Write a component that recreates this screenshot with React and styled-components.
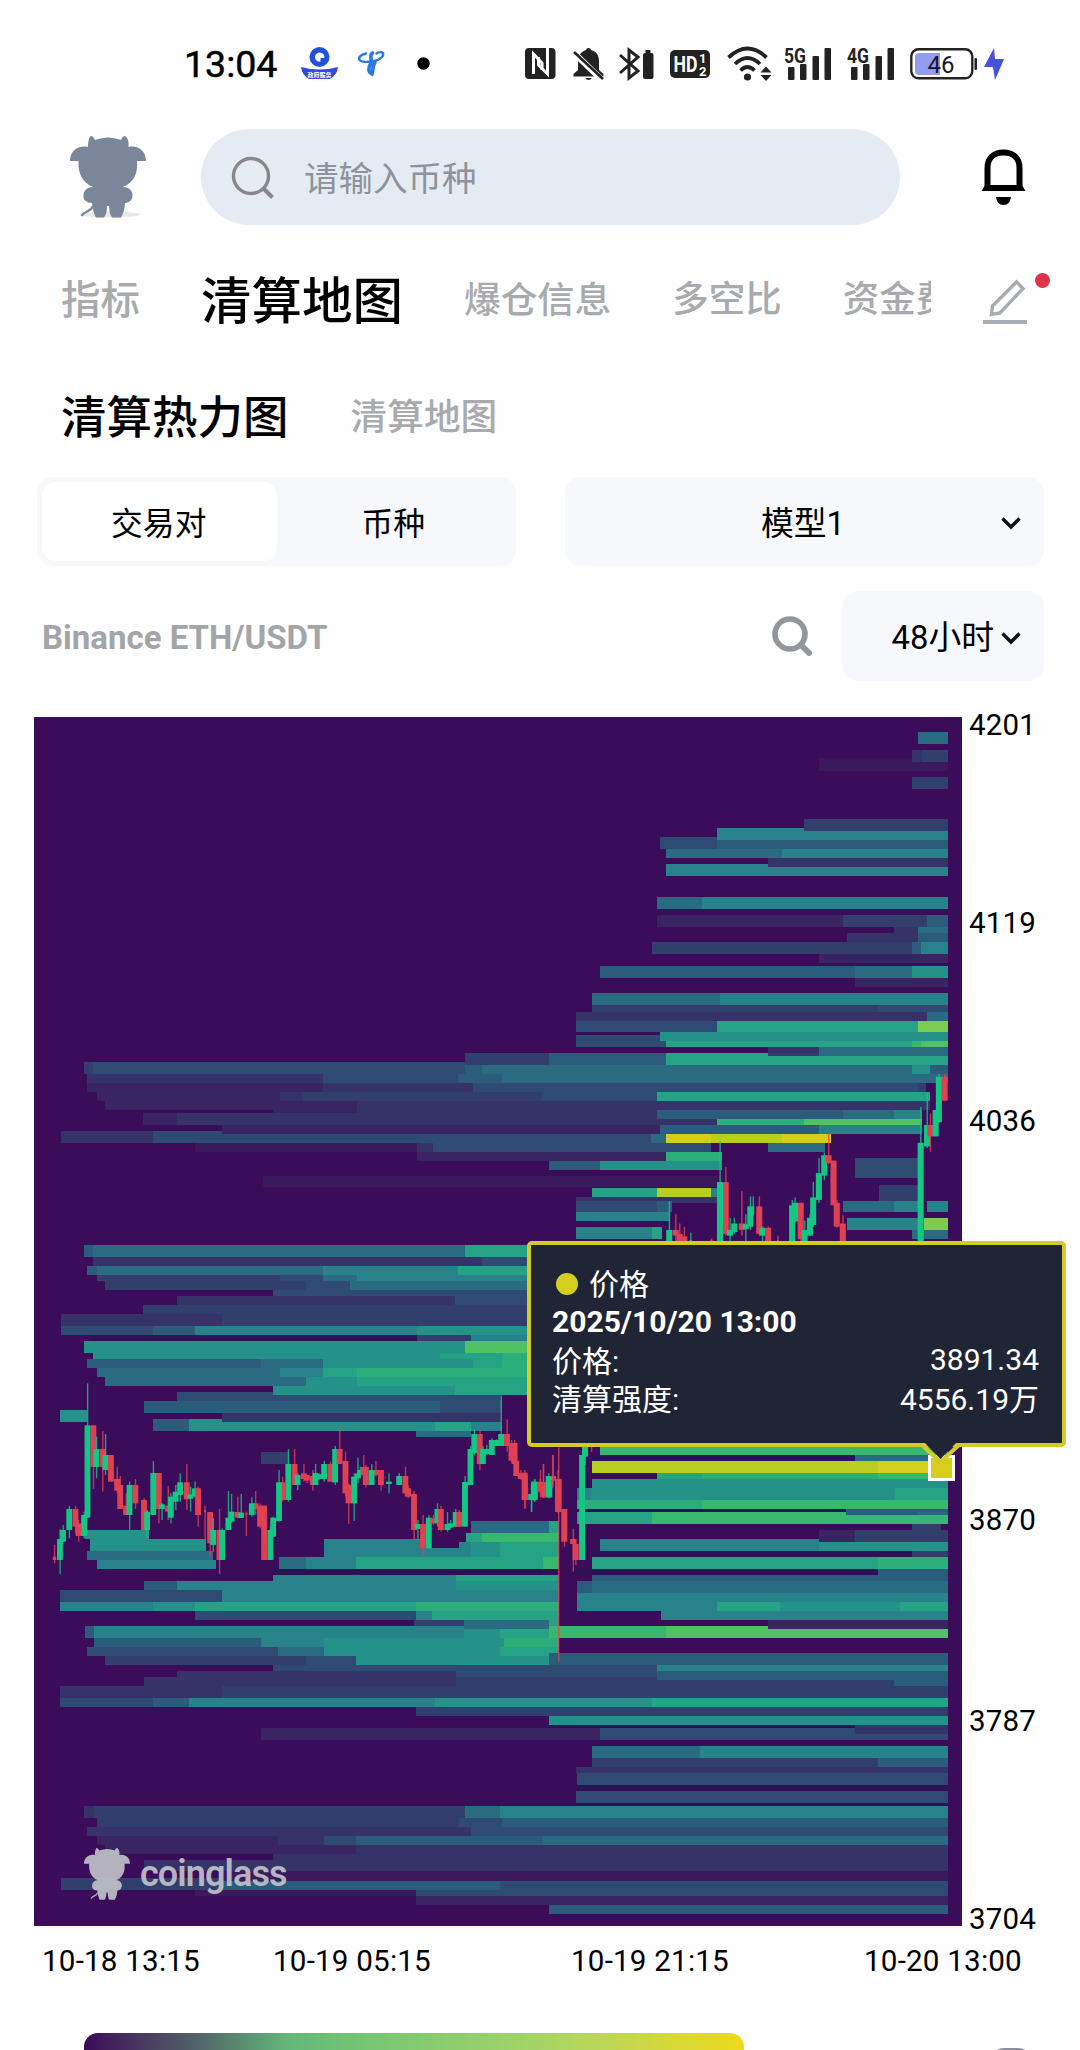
import React from "react";
import styled, { createGlobalStyle } from "styled-components";

const GlobalStyle = createGlobalStyle`
    * {
        box-sizing: border-box;
    }
    body {
        margin: 0;
        background: #fefefe;
        font-family: Roboto, "Noto Sans CJK SC", sans-serif;
        color: #000;
    }
    svg {
        display: block;
        flex: none;
        overflow: visible;
    }
`;

const Page = styled.div`
    width: 1080px;
    height: 2050px;
    overflow: hidden;
    display: flex;
    flex-direction: column;
    & > * {
        flex: none;
    }
`;

/* status bar */
const StatusBar = styled.div`
    height: 129px;
    padding: 0 70px 2px 184px;
    display: flex;
    align-items: center;
`;
const Clock = styled.span`
    flex: none;
    width: 117px;
    font-size: 37.5px;
    font-weight: 400;
    -webkit-text-stroke: 0.5px #000;
`;
const StatusIcon = styled.svg`
    margin-left: ${props => props.$gap || 0}px;
`;

/* header */
const Header = styled.header`
    height: 96px;
    padding-left: 70px;
    display: flex;
    align-items: center;
`;
const Avatar = styled.div`
    color: #7a879a;
`;
const SearchBox = styled.div`
    width: 699px;
    height: 96px;
    margin: 0 81px 0 55px;
    padding-left: 30px;
    border-radius: 48px;
    background: #e4ebf3;
    display: flex;
    align-items: center;
    gap: 30px;
`;
const Placeholder = styled.span`
    margin-top: -2px;
    font-size: 34.5px;
    color: #8d939c;
`;

/* tabs */
const TabBar = styled.nav`
    height: 148px;
    padding-left: 61px;
    display: flex;
    align-items: center;
`;
const TabList = styled.div`
    width: 870px;
    height: 100px;
    padding-bottom: 5px;
    overflow: hidden;
    display: flex;
    align-items: center;
    gap: 61px;
`;
const Tab = styled.span`
    flex: none;
    white-space: nowrap;
    font-size: ${props => props.$size}px;
    font-weight: 500;
    color: ${props => (props.$active ? "#000" : "#a8aaad")};
`;
const EditButton = styled.div`
    position: relative;
    margin-left: 52px;
    height: 44px;
    margin-top: 4px;
`;
const RedDot = styled.i`
    position: absolute;
    top: -6px;
    left: 52px;
    width: 15px;
    height: 15px;
    border-radius: 50%;
    background: #df3447;
`;
const SubTabs = styled.nav`
    height: 86px;
    padding: 0 0 5px 61px;
    display: flex;
    align-items: center;
    gap: 62px;
`;

/* controls */
const Controls = styled.div`
    height: 89px;
    margin: 18px 36px 0 37px;
    display: flex;
    justify-content: space-between;
`;
const Segment = styled.div`
    width: 479px;
    padding: 5px;
    border-radius: 16px;
    background: #f6f8fb;
    display: flex;
`;
const SegmentItem = styled.div`
    flex: 1;
    border-radius: 14px;
    background: ${props => (props.$active ? "#fff" : "transparent")};
    display: flex;
    align-items: center;
    justify-content: center;
    font-size: 31.8px;
    padding: 0 1px 2px 0;
`;
const Select = styled.div`
    width: ${props => props.$width}px;
    height: ${props => props.$height}px;
    padding-right: 23px;
    border-radius: 16px;
    background: #f6f8fb;
    display: flex;
    align-items: center;
    justify-content: flex-end;
    font-size: 32.8px;
`;
const SelectValue = styled.span`
    flex: ${props => (props.$wide ? 1 : "none")};
    margin-top: -3px;
    padding-left: ${props => (props.$wide ? 40 : 0)}px;
    margin-right: ${props => (props.$wide ? 0 : 7)}px;
    text-align: center;
`;
const SelectArrow = styled.svg`
    margin-top: 3px;
`;
const PairRow = styled.div`
    height: 90px;
    margin: 25px 36px 0 42px;
    display: flex;
    align-items: center;
`;
const PairName = styled.span`
    flex: 1;
    margin-top: 2px;
    font-size: 33px;
    font-weight: 700;
    color: #a3a5a8;
`;
const PairSearch = styled.svg`
    margin-right: 29px;
`;

/* chart */
const ChartArea = styled.section`
    position: relative;
    height: 1209px;
    margin-top: 36px;
    padding-left: 34px;
    display: flex;
`;
const PriceAxis = styled.div`
    padding: 0 0 0 7px;
    margin: -9px 0;
    display: flex;
    flex-direction: column;
`;
const AxisLabel = styled.span`
    font-size: 29.5px;
    line-height: 35px;
    margin-top: ${props => props.$top || 0}px;
    letter-spacing: 0.2px;
`;
const TimeAxis = styled.div`
    height: 70px;
    padding-left: 42px;
    display: flex;
    align-items: center;
`;
const TimeLabel = styled.span`
    width: ${props => props.$width}px;
    font-size: 29.6px;
    white-space: nowrap;
    letter-spacing: 0.2px;
`;
const Watermark = styled.div`
    position: absolute;
    left: 84px;
    top: 1131px;
    display: flex;
    align-items: center;
    gap: 10px;
    color: #c3c5cb;
    opacity: 0.9;
`;
const WatermarkText = styled.span`
    font-size: 36px;
    line-height: 52px;
    font-weight: 600;
    letter-spacing: -0.9px;
`;

/* tooltip */
const Tooltip = styled.div`
    position: absolute;
    left: 527px;
    top: 524px;
    width: 539px;
    height: 206px;
    padding: 20px 23px 0 21px;
    border: 4px solid #d3cb2a;
    border-radius: 5px;
    background: #1f2534;
    color: #fff;
    font-size: 30px;
`;
const TipLine = styled.div`
    height: ${props => props.$height}px;
    display: flex;
    align-items: center;
    justify-content: ${props => (props.$spread ? "space-between" : "flex-start")};
    font-weight: ${props => (props.$bold ? 700 : 400)};
`;
const TipName = styled.span`
    margin-top: -2px;
`;
const TipDot = styled.i`
    width: 22px;
    height: 22px;
    margin: 2px 11px 0 4px;
    border-radius: 50%;
    background: #d6ce1e;
`;
const TipArrow = styled.svg`
    position: absolute;
    left: 920px;
    top: 724px;
`;
const Marker = styled.div`
    position: absolute;
    left: 928px;
    top: 738px;
    width: 27px;
    height: 26px;
    border: 3px solid #fff;
    background: #d6ce1e;
`;

/* legend */
const Legend = styled.div`
    margin-top: 37px;
    padding-left: 84px;
    display: flex;
    align-items: flex-start;
`;
const LegendBar = styled.div`
    width: 660px;
    height: 40px;
    border-radius: 14px;
    background: linear-gradient(90deg, #3b0c5a 0%, #46305f 7%, #52636a 17%, #63b879 31%, #74c573 42%, #a3d466 68%, #bad65a 78%, #dcd832 91%, #ecd91c 100%);
`;
const LegendToggle = styled.div`
    width: 42px;
    height: 42px;
    margin: 15px 0 0 246px;
    border-radius: 14px;
    background: #8b8f9b;
`;

const COLORS = {
    x: "#2b1256",
    a: "#3a1a5c",
    b: "#382561",
    c: "#353367",
    d: "#323f6d",
    e: "#2f4b73",
    f: "#2c5c7b",
    g: "#2a6b82",
    h: "#27828a",
    i: "#249289",
    j: "#26a284",
    k: "#2cae7a",
    l: "#38b86f",
    m: "#50c264",
    n: "#7dcb50",
    o: "#b8cf22",
    p: "#d6ce1e",
};

// [top, bottom, end, [x, level], ...] every level runs to the next x
const END = 947.5;
const ROWS = [
    [758, 771, END, [819, "a"]],
    [732, 744, END, [918, "g"]],
    [750, 762, END, [912, "c"], [922, "d"]],
    [777, 789, END, [912, "d"]],
    [819, 831, END, [804, "d"]],
    [828, 831, 804, [717, "h"]],
    [831, 840, END, [717, "h"]],
    [837, 849, 717, [660, "e"]],
    [840, 849, END, [717, "f"]],
    [849, 857.5, END, [666, "g"], [782, "h"]],
    [857.5, 867, END, [768, "c"]],
    [864, 867, 768, [666, "h"]],
    [867, 876, END, [666, "h"]],
    [897, 908.5, END, [657, "g"], [702, "h"]],
    [915, 927, END, [657, "b"], [843, "d"], [927, "f"]],
    [927, 933, END, [894, "c"], [918, "g"]],
    [933, 942, END, [847, "c"], [918, "f"]],
    [942, 954, END, [651.5, "d"], [912, "f"], [921, "h"]],
    [954, 963, END, [819, "b"]],
    [966, 977.5, END, [600, "f"], [855, "g"], [912, "i"]],
    [977.5, 987, END, [855, "b"]],
    [993, 1004.6, END, [591.5, "g"], [720, "h"]],
    [1004.6, 1014, END, [591.5, "d"], [878, "e"]],
    [1012, 1023, END, [576, "c"], [927, "g"]],
    [1021, 1032, END, [576, "e"], [717, "j"], [918, "n"]],
    [1032, 1041, END, [660, "i"]],
    [1035, 1041, 660, [576, "e"]],
    [1041, 1047, END, [576, "e"], [666, "j"], [912, "l"], [921, "m"]],
    [1047, 1053, END, [768, "c"], [819, "g"]],
    [1053, 1065, END, [465, "d"], [549, "f"], [666, "j"]],
    [1053, 1056, END, [768, "d"], [819, "g"]],
    [1062, 1074, 465, [84, "d"], [93, "e"]],
    [1065, 1074, END, [465, "f"], [482, "g"], [912, "i"], [930, "f"]],
    [1074, 1083, END, [87, "c"], [323, "e"], [458, "f"], [502, "g"]],
    [1083, 1092, 926, [87, "b"], [323, "c"], [473, "e"], [918, "d"]],
    [1092, 1101, 930, [97, "b"], [280, "c"], [303, "d"], [542, "e"], [657, "j"]],
    [1101, 1110, 930, [105, "b"], [357, "c"]],
    [1110, 1113, 657, [273, "b"], [357, "c"]],
    [1110, 1119, 922, [657, "f"], [843, "g"], [894, "h"]],
    [1113, 1125, 657, [143, "b"], [177, "c"]],
    [1119, 1125, 922, [657, "c"], [717, "k"], [804, "m"]],
    [1125, 1134, 922, [222, "b"], [660, "f"], [819, "h"]],
    [1131, 1143, 222, [61, "c"], [153, "e"]],
    [1134, 1143, 831, [222, "e"], [651, "g"], [666, "p"], [711, "o"], [782, "p"]],
    [1143, 1152, 711, [195, "a"], [417, "c"], [433, "e"]],
    [1143, 1152, 825, [768, "g"]],
    [1152, 1161, 722, [417, "b"], [666, "k"]],
    [1161, 1170, 722, [549, "f"], [600, "i"]],
    [1176, 1187, 717, [263, "a"]],
    [1158, 1178, 918, [855, "e"]],
    [1185, 1201, 918, [879, "d"]],
    [1188, 1197, 717, [591.5, "j"], [657, "o"], [711, "h"]],
    [1197, 1203, 717, [576, "c"]],
    [1201, 1212, 672, [576, "e"], [657, "f"]],
    [1212, 1221, 670, [576, "h"]],
    [1227, 1238.5, 662, [576, "h"], [652, "j"]],
    [1201, 1212, 918, [843, "g"], [894, "h"]],
    [1201, 1212, END, [927, "h"]],
    [1218, 1230, 918, [847, "h"]],
    [1218, 1230, END, [924, "n"]],
    [1230, 1238.5, END, [912, "g"]],

    [1245, 1257, 530, [84, "f"], [93, "g"], [465, "j"]],
    [1257, 1266, 530, [93, "c"], [482, "e"]],
    [1266, 1275, 530, [87, "f"], [97, "g"], [323, "h"], [458, "j"]],
    [1275, 1281, 530, [97, "d"], [280, "e"], [323, "g"], [357, "h"]],
    [1281, 1290, 530, [105, "d"], [306, "e"], [350, "g"]],
    [1290, 1299, 530, [273, "e"]],
    [1296, 1305, 530, [177, "c"], [455, "e"]],
    [1305, 1314, 530, [143, "d"]],
    [1314, 1326, 530, [61, "c"], [222, "d"]],
    [1326, 1335, 530, [61, "e"], [153, "f"], [195, "h"], [417, "i"]],
    [1335, 1341, 530, [93, "x"], [417, "d"], [471, "h"]],
    [1341, 1353, 530, [84, "i"], [465, "m"]],
    [1353, 1359, 530, [93, "i"], [440, "j"], [502, "k"]],
    [1359, 1368, 530, [87, "f"], [261, "g"], [323, "i"], [473, "j"], [502, "k"]],
    [1368, 1377, 530, [97, "g"], [280, "h"], [323, "j"], [357, "k"]],
    [1377, 1386, 530, [105, "g"], [306, "i"], [357, "j"]],
    [1386, 1395, 530, [273, "i"], [455, "j"]],
    [1392, 1395, 273, [177, "e"]],
    [1395, 1401, 502, [177, "e"]],
    [1401, 1413, 502, [144, "f"], [440, "e"]],
    [1413, 1422, 502, [222, "c"]],
    [1419, 1422, 222, [153, "f"], [189, "i"]],
    [1422, 1431, 502, [153, "f"], [189, "i"], [435, "j"], [471, "h"]],
    [1431, 1437, 471, [416, "g"]],
    [1410, 1422, 87, [60, "i"]],
    [1452, 1464, 289, [261, "d"]],

    [1530, 1539, 149, [85, "i"]],
    [1539, 1551, 206, [90, "i"]],
    [1551, 1560, 213, [87, "g"]],
    [1560, 1569, 216, [97, "h"]],
    [1521, 1533, 559, [471, "g"], [549, "j"]],
    [1533, 1542, 559, [466, "j"], [482, "l"]],
    [1539, 1557, 420, [324, "h"]],
    [1548, 1557, 459, [420, "h"]],
    [1542, 1557, 559, [459, "h"], [471, "i"], [500, "j"]],
    [1557, 1569, 559, [279, "g"], [306, "h"], [356, "j"], [543, "l"]],
    [1569, 1575, 559, [273, "x"]],
    [1575, 1581, 559, [273, "h"], [456, "j"]],
    [1581, 1590, 559, [144, "f"], [177, "h"], [456, "i"]],
    [1590, 1602, 559, [60, "e"], [222, "h"]],
    [1602, 1611, 559, [60, "h"], [153, "i"], [195, "j"], [416, "k"]],
    [1611, 1620, 559, [195, "e"], [416, "h"], [432, "j"]],
    [1620, 1629, 559, [414, "d"], [464, "g"], [549, "j"]],
    [1626, 1638, 464, [85, "f"], [94, "h"]],
    [1629, 1638, 559, [464, "i"], [500, "j"]],
    [1638, 1647, 559, [94, "f"], [261, "h"], [324, "i"], [504, "k"]],
    [1647, 1656, 559, [87, "e"], [278, "g"], [324, "i"], [500, "j"]],
    [1656, 1665, 549, [105, "d"], [306, "e"], [356, "i"]],

    [1446, 1455, END, [600, "l"]],
    [1455, 1461, END, [591.5, "x"], [855, "g"]],
    [1461, 1473, END, [591.5, "o"], [878, "p"]],
    [1473, 1479, END, [657, "j"], [702, "k"], [878, "l"]],
    [1479, 1488, END, [591.5, "i"]],
    [1488, 1500, END, [577, "h"], [591, "i"], [895, "j"]],
    [1500, 1509, END, [577, "k"], [702, "l"]],
    [1509, 1512, END, [577, "x"], [846, "f"]],
    [1512, 1524, END, [577, "j"], [652, "l"]],
    [1512, 1515, END, [846, "f"], [918, "g"]],
    [1524, 1533, 941, [912, "d"]],
    [1530, 1542, END, [819, "b"], [855, "d"]],
    [1539, 1542, 819, [600, "h"]],
    [1542, 1551, END, [600, "h"], [819, "i"]],
    [1551, 1557, END, [591.5, "x"], [912, "d"]],
    [1557, 1569, END, [591.5, "j"], [878, "k"]],
    [1569, 1575, END, [577, "x"], [878, "f"]],
    [1575, 1584, END, [591.5, "f"]],
    [1581, 1593, END, [577, "f"], [591.5, "g"]],
    [1593, 1602, END, [577, "h"]],
    [1602, 1611, END, [577, "h"], [717, "j"], [780, "i"], [900, "j"]],
    [1611, 1620, END, [661, "h"]],
    [1620, 1629, END, [768, "b"]],
    [1626, 1629, 768, [549, "l"], [666, "m"]],
    [1629, 1638, END, [549, "l"], [666, "m"]],
    [1653, 1665, END, [549, "f"]],
    [1665, 1671, END, [273, "e"], [657, "h"]],
    [1671, 1680, END, [177, "c"], [456, "e"], [657, "f"]],
    [1677, 1689, END, [144, "c"], [456, "d"], [894, "f"]],
    [1677, 1680, END, [657, "f"]],
    [1686, 1698, END, [60, "c"], [222, "d"]],
    [1698, 1707, END, [60, "e"], [153, "f"], [189, "h"], [435, "i"], [652, "j"]],
    [1707, 1716, END, [416, "d"]],
    [1716, 1725, END, [549, "i"]],
    [1725, 1728, END, [549, "x"], [855, "c"]],
    [1728, 1740, END, [261, "b"], [600, "e"]],
    [1728, 1734, END, [855, "c"]],
    [1746, 1758, END, [591.5, "g"], [700, "h"]],
    [1758, 1767, END, [591.5, "d"], [878, "f"]],
    [1767, 1773, END, [576, "c"]],
    [1773, 1785, END, [577, "e"]],
    [1785, 1791, END, [577, "x"]],
    [1791, 1803, END, [576, "e"]],
    [1803, 1806, END, [576, "x"]],
    [1806, 1818, END, [84, "c"], [94, "d"], [465, "g"], [500, "h"]],
    [1818, 1827, END, [97, "d"], [459, "e"], [502, "f"]],
    [1827, 1836, END, [87, "c"], [471, "e"]],
    [1836, 1845, END, [97, "b"], [278, "c"], [324, "e"], [356, "f"], [543, "g"]],
    [1845, 1854, END, [105, "b"], [356, "c"]],
    [1854, 1860, END, [273, "c"]],
    [1860, 1871, END, [144, "c"]],
    [1871, 1881, END, [222, "a"]],
    [1878, 1890, 222, [61, "d"]],
    [1881, 1890, END, [222, "f"], [500, "e"]],
    [1890, 1896, END, [195, "a"], [416, "e"]],
    [1896, 1905, END, [416, "b"]],
    [1905, 1914, END, [549, "f"]],
];

// [x, body top, body bottom, wick top, wick bottom, rising]
const CANDLE_GROUPS = [
    {
        transform: "translate(20 1360) scale(0.3444 0.3333)",
        candles: [
            [100, 590, 600, 555, 610, 0, 10], [116, 537, 600, 508, 643, 1], [125, 510, 545, 495, 545, 1], [143, 447, 510, 438, 535, 1],
            [161, 447, 500, 438, 520, 0], [170, 490, 528, 480, 545, 0], [186, 465, 528, 455, 535, 1], [213, 196, 321, 196, 387, 0],
            [196, 196, 473, 70, 473, 1], [240, 267, 321, 213, 395, 0], [222, 267, 321, 230, 355, 1], [248, 285, 330, 222, 345, 1],
            [264, 285, 365, 285, 365, 0], [282, 357, 392, 320, 400, 0], [291, 375, 447, 348, 447, 0], [308, 437, 465, 400, 465, 0],
            [335, 375, 430, 357, 447, 0], [318, 375, 465, 365, 510, 1], [360, 420, 510, 415, 515, 0], [369, 455, 510, 450, 535, 1],
            [403, 339, 447, 339, 490, 0], [387, 339, 465, 303, 465, 1], [412, 433, 447, 430, 480, 1], [430, 437, 455, 378, 480, 0],
            [438, 410, 473, 400, 490, 1], [452, 395, 425, 375, 450, 1], [465, 367, 405, 340, 425, 1], [484, 367, 418, 312, 450, 0],
            [495, 403, 416, 380, 455, 1], [508, 385, 410, 365, 415, 1], [517, 385, 465, 380, 500, 0], [537, 450, 456, 437, 540, 0, 6],
            [552, 456, 550, 456, 590, 0], [561, 510, 555, 475, 575, 1], [579, 510, 600, 447, 643, 0], [587, 510, 600, 505, 600, 1],
            [605, 473, 510, 393, 510, 1], [614, 455, 485, 402, 490, 1], [632, 456, 473, 410, 475, 0], [642, 458, 474, 402, 475, 1],
            [657, 460, 464, 455, 528, 0, 8], [684, 430, 447, 393, 465, 0], [673, 430, 465, 412, 470, 1], [697, 437, 500, 430, 505, 0],
            [709, 437, 600, 437, 600, 0], [727, 510, 600, 500, 600, 1], [735, 473, 530, 470, 530, 1], [762, 367, 420, 350, 425, 0],
            [752, 367, 483, 330, 485, 1], [797, 312, 375, 267, 375, 0], [779, 312, 420, 267, 425, 1], [806, 345, 375, 340, 390, 1],
            [824, 340, 357, 312, 365, 0], [833, 345, 362, 345, 370, 0], [850, 348, 375, 330, 392, 0], [858, 339, 375, 312, 375, 1],
            [868, 343, 357, 340, 360, 1], [883, 312, 357, 303, 365, 1], [901, 312, 365, 305, 365, 0], [915, 267, 367, 258, 375, 1],
            [928, 267, 312, 196, 312, 0], [945, 303, 400, 275, 410, 0], [954, 375, 430, 370, 492, 0], [970, 350, 430, 340, 483, 1],
            [981, 340, 355, 293, 370, 1], [988, 330, 345, 320, 350, 1], [1004, 321, 375, 315, 383, 0], [998, 321, 345, 285, 350, 0],
            [1033, 330, 345, 303, 350, 0], [1021, 330, 375, 312, 375, 1], [1048, 330, 375, 330, 392, 0], [1071, 365, 372, 340, 400, 1],
            [1101, 348, 375, 339, 375, 1], [1119, 348, 400, 320, 410, 0], [1127, 385, 410, 375, 415, 0], [1144, 402, 510, 393, 540, 0],
            [1155, 492, 507, 480, 540, 1], [1170, 492, 565, 465, 587, 0], [1187, 473, 565, 465, 565, 1], [1200, 475, 490, 465, 495, 0],
            [1212, 447, 490, 430, 500, 1], [1222, 447, 510, 437, 515, 0], [1241, 492, 510, 456, 515, 1], [1250, 490, 503, 480, 505, 1],
            [1265, 456, 500, 447, 500, 1], [1275, 456, 500, 450, 500, 0], [1292, 366, 500, 348, 500, 1], [1308, 267, 375, 258, 375, 1],
            [1319, 222, 280, 208, 285, 1], [1335, 222, 312, 208, 330, 0], [1344, 267, 312, 258, 312, 1], [1355, 267, 282, 255, 285, 1],
            [1370, 240, 285, 235, 285, 1], [1383, 240, 258, 238, 258, 1], [1414, 222, 258, 178, 275, 0], [1397, 222, 258, 110, 258, 1],
            [1427, 249, 302, 240, 310, 0], [1436, 249, 312, 240, 320, 0], [1441, 302, 348, 302, 348, 0], [1454, 339, 357, 330, 360, 0],
            [1466, 348, 420, 345, 447, 0], [1485, 402, 420, 365, 456, 1], [1495, 366, 420, 357, 425, 1], [1510, 366, 395, 357, 400, 0],
            [1520, 366, 412, 312, 415, 0], [1535, 348, 412, 339, 415, 1], [1548, 348, 362, 285, 365, 0], [1562, 357, 455, 330, 460, 0],
        ],
    },
    {
        transform: "translate(520 1440) scale(0.3571 0.3333)",
        candles: [
            [13, 98, 180, 90, 205, 0], [32, 162, 180, 130, 215, 1], [40, 125, 175, 118, 185, 1], [57, 125, 150, 90, 155, 0],
            [65, 135, 172, 72, 172, 0], [82, 110, 172, 108, 172, 1], [91, 120, 140, 45, 145, 0, 6], [108, 117, 216, 22, 665, 0],
            [124, 207, 305, 207, 320, 0], [149, 297, 312, 267, 395, 0], [156, 312, 360, 297, 375, 0], [174, 45, 360, 45, 360, 1],
            [182, 18, 50, 18, 75, 1], [200, 18, 20, 18, 36, 0, 6],
        ],
    },
    {
        transform: "translate(520 700) scale(0.3571)",
        candles: [
            [418, 1484, 1520, 1403, 1520, 1], [436, 1484, 1500, 1440, 1515, 0], [447, 1495, 1515, 1466, 1515, 0], [460, 1502, 1515, 1475, 1515, 0],
            [478, 1512, 1515, 1492, 1515, 1, 6], [536, 1512, 1515, 1508, 1515, 0, 6], [576, 1350, 1495, 1308, 1500, 0], [560, 1350, 1520, 1235, 1520, 1],
            [588, 1484, 1500, 1450, 1515, 1], [600, 1466, 1490, 1450, 1495, 1], [621, 1466, 1484, 1375, 1500, 0], [632, 1468, 1482, 1440, 1515, 1],
            [645, 1418, 1475, 1390, 1484, 1], [653, 1418, 1440, 1390, 1445, 1, 6], [670, 1418, 1495, 1390, 1500, 0], [679, 1478, 1500, 1475, 1515, 1], [695, 1478, 1520, 1475, 1520, 0],
            [722, 1512, 1515, 1500, 1515, 0, 4], [786, 1408, 1510, 1408, 1515, 0], [770, 1408, 1460, 1393, 1465, 1], [762, 1415, 1520, 1400, 1520, 1],
            [797, 1484, 1520, 1458, 1520, 1], [812, 1450, 1500, 1440, 1500, 1], [821, 1393, 1470, 1350, 1475, 1], [837, 1325, 1400, 1283, 1408, 1],
            [852, 1275, 1332, 1267, 1345, 1], [864, 1275, 1297, 1213, 1300, 0], [878, 1290, 1415, 1290, 1415, 0], [887, 1408, 1475, 1400, 1478, 0],
            [904, 1466, 1520, 1443, 1520, 0], [1122, 1240, 1520, 1140, 1520, 1], [1140, 1190, 1250, 1100, 1255, 1], [1149, 1190, 1222, 1158, 1265, 0],
            [1164, 1148, 1222, 1148, 1222, 1], [1173, 1055, 1182, 1047, 1185, 1], [1189, 1055, 1122, 1047, 1122, 0],
        ],
    },
];

const HeatRow = ({ row }) => {
    const [top, bottom, end, ...steps] = row;
    return steps.map(([x, level], index) => {
        const next = index === steps.length - 1 ? end : steps[index + 1][0];
        return <rect key={x} x={x} y={top} width={next - x} height={bottom - top} fill={COLORS[level]} />;
    });
};

const Candle = ({ data }) => {
    const [x, top, bottom, high, low, up, width = 17] = data;
    const fill = up ? "#14c784" : "#df4153";
    return (
        <g fill={fill}>
            <rect x={x - 1.6} y={high} width="4" height={low - high} opacity="0.8" />
            <rect x={x - width / 2} y={top} width={width} height={bottom - top} />
        </g>
    );
};

const Heatmap = () => (
    <svg width="928" height="1209" viewBox="34 717 928 1209">
        <rect x="34" y="717" width="928" height="1209" fill="#3b0c5a" />
        <g shapeRendering="crispEdges">
            {ROWS.map((row, index) => <HeatRow key={index} row={row} />)}
        </g>
        {CANDLE_GROUPS.map(group => (
            <g key={group.transform} transform={group.transform}>
                {group.candles.map((data, index) => <Candle key={index} data={data} />)}
            </g>
        ))}
    </svg>
);

const Bull = ({ width, height, shadow }) => (
    <svg width={width} height={height} viewBox="0 0 76 82" preserveAspectRatio="none" fill="currentColor">
        {shadow && <ellipse cx="40" cy="78.5" rx="30" ry="3" fill="#e6e8ea" />}
        <path d="M18 11 C18 5 19 1 21 0 C23 0 24 2 25 4 Q38 -1 51 4 C52 1 53 0 55 0 C58 2 59 6 58.5 11 C68 9 76 15 76 25 L67 25 C68 38 64 46 53 51 C60 51 63 56 62.5 60 C62 65 58 67 55 67 C55 73 53 78 51 81.5 L42 81.5 C40 79 39.5 75 39 70 L37 70 C37 75 36 79 34 81.5 L26 81.5 C24 78 23 74 22 67 C17 67 13 64 13.5 60 C13 55 17 51 23 51 C12 46 8 38 8.5 25 L0 25 C0 15 8 9 18 11 Z" />
        <path d="M23 70 C20 77 15 74 11.5 80" fill="none" stroke="currentColor" strokeWidth="2" />
    </svg>
);

const Chevron = () => (
    <SelectArrow width="20" height="14" viewBox="0 0 20 14">
        <path d="M1.5 2.5 L10 11 L18.5 2.5" fill="none" stroke="#111" strokeWidth="3.4" />
    </SelectArrow>
);

const Signal = ({ label, gap }) => (
    <StatusIcon $gap={gap} width="47" height="34" viewBox="0 0 47 34" fill="#222">
        <text x="-1" y="15.5" fontSize="21" fontWeight="700" fontFamily="Roboto" textLength="22" lengthAdjust="spacingAndGlyphs">{label}</text>
        <rect x="3" y="20" width="6.5" height="13" rx="1" />
        <rect x="15" y="17" width="6.5" height="16" rx="1" />
        <rect x="27.5" y="9" width="6.5" height="24" rx="1" />
        <rect x="39.5" y="1" width="6.5" height="32" rx="1" />
    </StatusIcon>
);

const StatusIcons = () => (
    <>
        <svg width="37" height="33" viewBox="0 0 37 33">
            <circle cx="18.5" cy="10" r="10" fill="#2152de" />
            <path d="M18.5 5.5 a4.6 4.6 0 1 0 1 9.1 v-3.6 h3.8 a4.7 4.7 0 0 0 -4.8 -5.5z" fill="#fff" />
            <path d="M0 20 Q18.5 25 37 20 Q36 28 29 32 H8 Q1 28 0 20Z" fill="#3448dd" />
            <text x="18.5" y="30" fontSize="6" fontWeight="700" fill="#fff" textAnchor="middle" fontFamily="Noto Sans CJK SC">政府服务</text>
        </svg>
        <StatusIcon $gap={20} width="27" height="27" viewBox="0 0 27 27" fill="none" stroke="#2c78e4" strokeLinecap="round">
            <path d="M8 3.5 C3 4.5 0 7.5 1.5 10 C5 13.5 22 12 25 5.5 C26 2 22 1 18.5 3.5" strokeWidth="2.4" />
            <path d="M14.5 3 C11 5 14 8 13 13 C10 18 10 22 14 24 C15.5 20 14 17 17 12" strokeWidth="3.6" />
        </StatusIcon>
        <StatusIcon $gap={32} width="13" height="13" viewBox="0 0 13 13"><circle cx="6.5" cy="6.5" r="6.2" /></StatusIcon>
        <StatusIcon $gap={95} width="31" height="31" viewBox="0 0 31 31">
            <rect width="30.5" height="31" rx="4" fill="#222" />
            <path d="M8.5 26 V6 L17 15 V22" fill="none" stroke="#fff" strokeWidth="3" />
            <path d="M22.5 0 V26 L13.5 17 V9" fill="none" stroke="#fff" strokeWidth="3" />
        </StatusIcon>
        <StatusIcon $gap={17} width="31" height="34" viewBox="0 0 31 34" fill="#222">
            <path d="M15.5 1 c2 0 2 1.5 2.5 2 c6 1.5 8 6 8 11 v9 l4.5 4 v2.5 H0.5 V27 l4.5-4 v-9 c0-5 3-9.5 8-11 c.5-.5.5-2 2.5-2z" />
            <path d="M12 31 h7 q-3.5 4-7 0z" />
            <path d="M-1 4 L30 34" stroke="#fff" strokeWidth="6" />
            <path d="M1 5 L30 32" stroke="#222" strokeWidth="2.6" />
        </StatusIcon>
        <StatusIcon $gap={15} width="35" height="34" viewBox="0 0 35 34">
            <path d="M1 8 L19 24 L10 31 V3 L19 10 L1 26" fill="none" stroke="#222" strokeWidth="3" />
            <rect x="24" y="6" width="10.5" height="26" rx="2" fill="#222" />
            <rect x="26.5" y="3" width="5" height="5" fill="#222" />
        </StatusIcon>
        <StatusIcon $gap={16} width="40" height="28" viewBox="0 0 40 28">
            <rect width="40" height="28" rx="5" fill="#222" />
            <g fill="#fff" fontFamily="Roboto" fontWeight="700">
                <text x="3.5" y="22" fontSize="22" textLength="24" lengthAdjust="spacingAndGlyphs">HD</text>
                <text x="29" y="13" fontSize="13">1</text>
                <text x="29" y="25.5" fontSize="13">2</text>
            </g>
        </StatusIcon>
        <StatusIcon $gap={17} width="46" height="36" viewBox="0 0 46 36" fill="none" stroke="#222" strokeWidth="3.8">
            <path d="M1.5 11.5 Q20.5 -6.5 39.5 11.5" />
            <path d="M8 18 Q20.5 6 33 18" />
            <path d="M13.5 24.5 Q20.5 17.5 27.5 24.5" />
            <circle cx="20.5" cy="31" r="3.6" fill="#222" stroke="none" />
            <path d="M33.5 26.5 L39 20.5 L44.5 26.5Z M33.5 29 L39 35 L44.5 29Z" fill="#222" stroke="none" />
        </StatusIcon>
        <Signal label="5G" gap={12} />
        <Signal label="4G" gap={16} />
        <StatusIcon $gap={15} width="68" height="32" viewBox="0 0 68 32">
            <rect x="1.3" y="1.3" width="61" height="29" rx="7" fill="#fff" stroke="#222" strokeWidth="2.4" />
            <path d="M9 5 H30 V27 H9 Q5 27 5 23 V9 Q5 5 9 5Z" fill="#929cf0" />
            <rect x="64.5" y="10" width="2.5" height="12" rx="1" fill="#222" />
            <text x="31" y="24.5" fontSize="24" textAnchor="middle" fontFamily="Roboto" fill="#15182a">46</text>
        </StatusIcon>
        <StatusIcon $gap={6} width="20" height="32" viewBox="0 0 20 32">
            <path d="M10 0 L0 19 H9 L11 32 L20 11 H11Z" fill="#4550dd" />
        </StatusIcon>
    </>
);

const App = () => (
    <>
        <GlobalStyle />
        <Page>
            <StatusBar>
                <Clock>13:04</Clock>
                <StatusIcons />
            </StatusBar>
            <Header>
                <Avatar><Bull width={76} height={82} shadow /></Avatar>
                <SearchBox>
                    <svg width="43" height="43" viewBox="0 0 43 43" fill="none" stroke="#888" strokeWidth="3.4">
                        <circle cx="20" cy="20" r="17.5" />
                        <path d="M32 32 L41.5 41.5" strokeWidth="4" />
                    </svg>
                    <Placeholder>请输入币种</Placeholder>
                </SearchBox>
                <svg width="45" height="58" viewBox="0 0 45 58">
                    <path d="M6.5 38 V20 C6.5 10 13 4.5 22.5 4.5 C32 4.5 38.5 10 38.5 20 V38" fill="none" stroke="#000" strokeWidth="6" />
                    <path d="M4 37 H41 L44.5 43 H0.5Z" />
                    <path d="M15 49 H30 Q29 57 22.5 57 Q16 57 15 49Z" />
                </svg>
            </Header>
            <TabBar>
                <TabList>
                    <Tab $size={39.5}>指标</Tab>
                    <Tab $size={50.5} $active>清算地图</Tab>
                    <Tab $size={36.8}>爆仓信息</Tab>
                    <Tab $size={36.5}>多空比</Tab>
                    <Tab $size={36.5}>资金费率</Tab>
                </TabList>
                <EditButton>
                    <svg width="45" height="46" viewBox="0 0 45 46" fill="none" stroke="#a9abb3" strokeWidth="3.4">
                        <path d="M33.5 3 L40 9.5 L17 34 L8.5 35.5 L9.5 27Z" />
                        <path d="M0 43 H44" strokeWidth="4" />
                    </svg>
                    <RedDot />
                </EditButton>
            </TabBar>
            <SubTabs>
                <Tab $size={45.5} $active>清算热力图</Tab>
                <Tab $size={36.7}>清算地图</Tab>
            </SubTabs>
            <Controls>
                <Segment>
                    <SegmentItem $active>交易对</SegmentItem>
                    <SegmentItem>币种</SegmentItem>
                </Segment>
                <Select $width={479} $height={89}>
                    <SelectValue $wide>模型1</SelectValue>
                    <Chevron />
                </Select>
            </Controls>
            <PairRow>
                <PairName>Binance ETH/USDT</PairName>
                <PairSearch width="41" height="41" viewBox="0 0 41 41" fill="none" stroke="#93979c">
                    <circle cx="18" cy="18" r="15" strokeWidth="5.6" />
                    <path d="M29 29 L37 37" strokeWidth="6" strokeLinecap="round" />
                </PairSearch>
                <Select $width={202} $height={90}>
                    <SelectValue>48小时</SelectValue>
                    <Chevron />
                </Select>
            </PairRow>
            <ChartArea>
                <Heatmap />
                <PriceAxis>
                    <AxisLabel>4201</AxisLabel>
                    <AxisLabel $top={163}>4119</AxisLabel>
                    <AxisLabel $top={163}>4036</AxisLabel>
                    <AxisLabel $top={364}>3870</AxisLabel>
                    <AxisLabel $top={166}>3787</AxisLabel>
                    <AxisLabel $top={163}>3704</AxisLabel>
                </PriceAxis>
                <Watermark>
                    <Bull width={46} height={52} />
                    <WatermarkText>coinglass</WatermarkText>
                </Watermark>
                <Marker />
                <Tooltip>
                    <TipLine $height={36}><TipDot /><TipName>价格</TipName></TipLine>
                    <TipLine $height={40} $bold>2025/10/20 13:00</TipLine>
                    <TipLine $height={37} $spread><TipName>价格:</TipName><span>3891.34</span></TipLine>
                    <TipLine $height={39} $spread><TipName>清算强度:</TipName><TipName>4556.19万</TipName></TipLine>
                </Tooltip>
                <TipArrow width="40" height="26" viewBox="0 0 40 26">
                    <path d="M3 0 L20.5 18 L38 0Z" fill="#1f2534" />
                    <path d="M2 4 L20.5 21 L39 4" fill="none" stroke="#d3cb2a" strokeWidth="4" />
                </TipArrow>
            </ChartArea>
            <TimeAxis>
                <TimeLabel $width={231}>10-18 13:15</TimeLabel>
                <TimeLabel $width={298}>10-19 05:15</TimeLabel>
                <TimeLabel $width={293}>10-19 21:15</TimeLabel>
                <TimeLabel $width={160}>10-20 13:00</TimeLabel>
            </TimeAxis>
            <Legend>
                <LegendBar />
                <LegendToggle />
            </Legend>
        </Page>
    </>
);

export default App;
